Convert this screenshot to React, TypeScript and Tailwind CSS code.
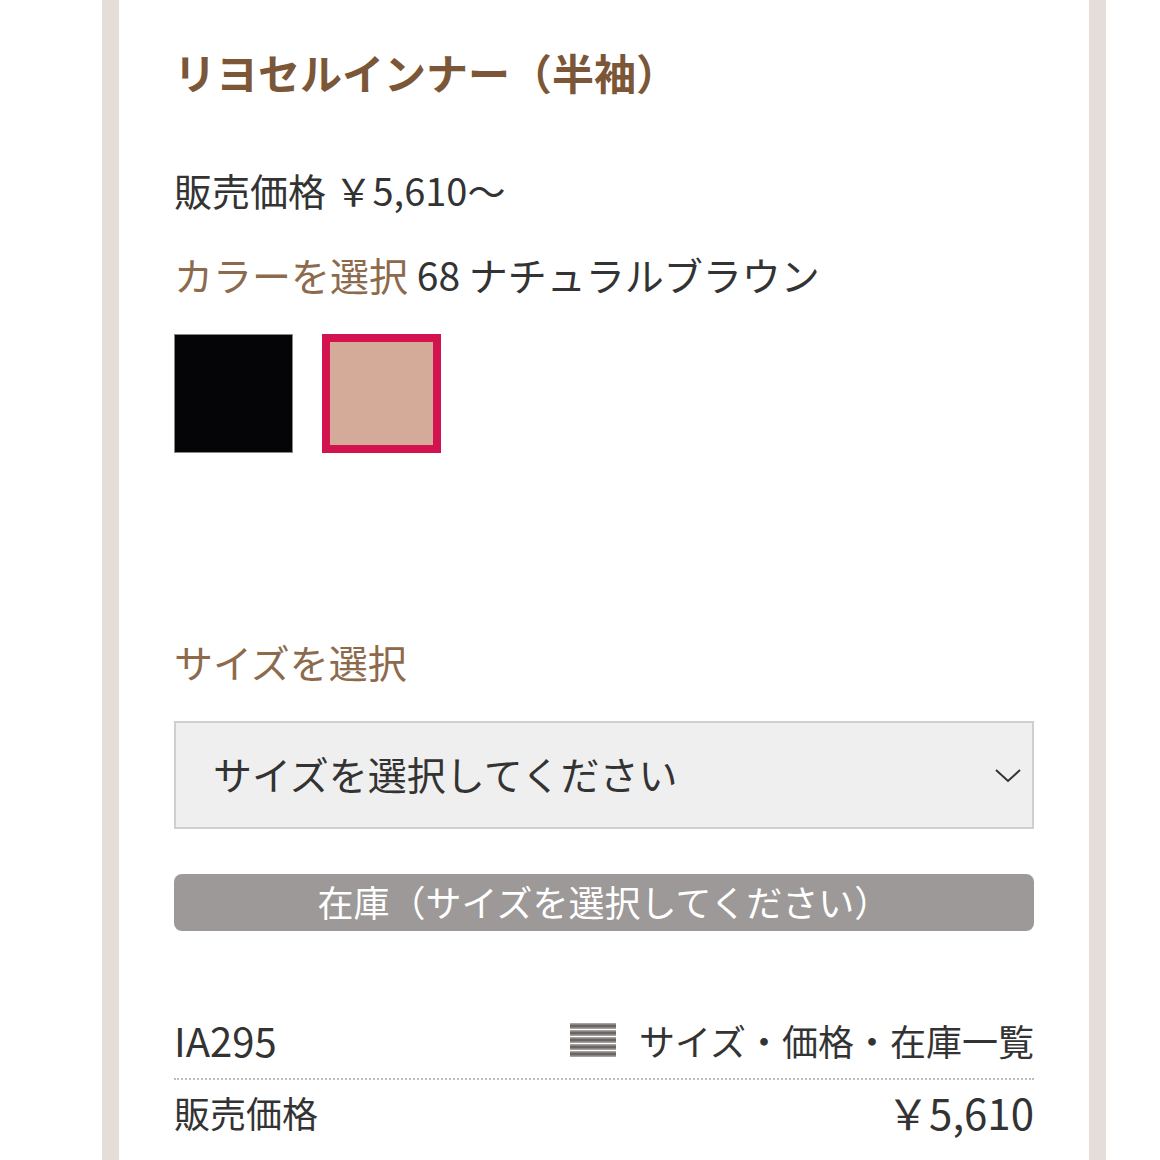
import { useState } from "react"

const font = { fontFamily: '"Noto Sans CJK JP", "Noto Sans", sans-serif' }

function StripeIcon() {
  return (
    <svg width="46" height="34" viewBox="0 0 46 34" className="shrink-0">
      <defs>
        <linearGradient id="bar" x1="0" y1="0" x2="0" y2="1">
          <stop offset="0" stopColor="#b5b2b0" />
          <stop offset="0.5" stopColor="#5a5655" />
          <stop offset="1" stopColor="#b5b2b0" />
        </linearGradient>
      </defs>
      {[0, 7, 14, 21, 28].map((y) => (
        <rect key={y} x="0" y={y} width="46" height="6" fill="url(#bar)" />
      ))}
    </svg>
  )
}

export default function App() {
  const [selected, setSelected] = useState(1)
  const swatches = ["bg-[#050507]", "bg-[#d3ab98]"]

  return (
    <div className="flex min-h-[1160px] bg-white text-[#333]" style={font}>
      <div className="w-[102px] shrink-0" />
      <div className="w-[17px] shrink-0 bg-[#e4ddd8]" />
      <div className="w-[970px] shrink-0 px-[55px]">
        <h1 className="mt-[42px] text-[42px] leading-[60px] font-bold text-[#7b5738]">
          リヨセルインナー（半袖）
        </h1>
        <p className="mt-[60px] text-[38px] leading-[56px]">販売価格 ￥5,610～</p>
        <p className="mt-[28px] text-[39px] leading-[56px]">
          <span className="text-[#8c6a4b]">カラーを選択</span> 68 ナチュラルブラウン
        </p>
        <div className="mt-[32px] flex gap-[29px]">
          {swatches.map((c, i) => (
            <button
              key={i}
              onClick={() => setSelected(i)}
              className={`h-[119px] w-[119px] ${c} ${
                selected === i ? "border-[8px] border-[#d3134f]" : "border border-[#888]"
              }`}
            />
          ))}
        </div>
        <p className="mt-[180px] text-[39px] leading-[56px] text-[#8c6a4b]">サイズを選択</p>
        <div className="mt-[32px] flex h-[108px] items-center justify-between border-2 border-[#cfcfcf] bg-[#efefef] pb-[4px] pl-[37px] pr-[10px]">
          <span className="text-[39px] leading-[56px]">サイズを選択してください</span>
          <svg width="28" height="20" viewBox="0 0 28 20" className="mt-[4px]">
            <path d="M2 5 L14 16 L26 5" fill="none" stroke="#333" strokeWidth="2" />
          </svg>
        </div>
        <div className="mt-[45px] flex h-[57px] items-center justify-center rounded-[8px] bg-[#9c9998] pb-[4px] text-[36px] leading-[56px] text-white">
          在庫（サイズを選択してください）
        </div>
        <div className="mt-[81px] flex items-center justify-between border-b-2 border-dotted border-[#bdbdbd] pb-[10px]">
          <span className="text-[40px] leading-[56px]">IA295</span>
          <span className="flex items-center gap-[23px] text-[36px] leading-[56px]">
            <StripeIcon />
            サイズ・価格・在庫一覧
          </span>
        </div>
        <div className="mt-[4px] flex items-center justify-between">
          <span className="text-[36px] leading-[56px]">販売価格</span>
          <span className="text-[42px] leading-[56px]">￥5,610</span>
        </div>
      </div>
      <div className="w-[17px] shrink-0 bg-[#e4ddd8]" />
    </div>
  )
}
